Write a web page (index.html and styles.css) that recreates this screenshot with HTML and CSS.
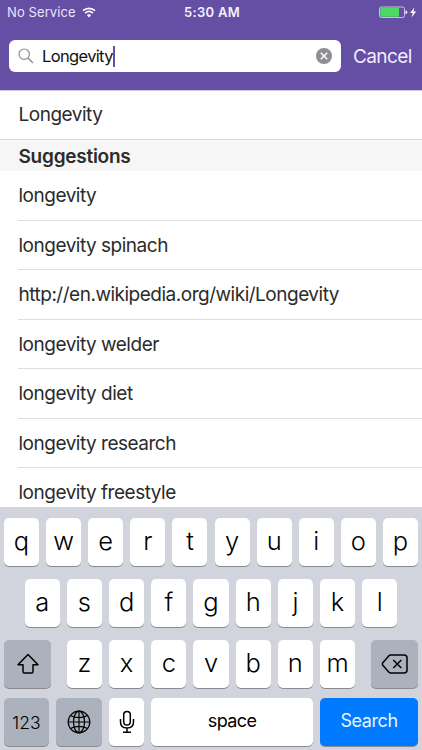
FILE: index.html
```html
<!DOCTYPE html>
<html lang="en">
<head>
<meta charset="utf-8">
<title>Search</title>
<link rel="stylesheet" href="styles.css">
</head>
<body>
<div class="screen">
  <header class="header">
    <div class="status">
      <div class="carrier"><span>No Service</span>
        <svg width="14" height="11" viewBox="0 0 14 11"><path d="M1 3.700C4.500.5 9.500.5 13 3.700M3.100 6.100C5.400 4.100 8.600 4.100 10.900 6.100" fill="none" stroke="#fff" stroke-width="1.700"/><path d="M4.800 8.100Q7 6.500 9.200 8.100L7 10.500Z" fill="#fff"/></svg>
      </div>
      <span class="clock">5:30 AM</span>
      <svg class="battery" width="38" height="13" viewBox="0 0 38 13"><rect x=".5" y="1" width="25" height="10.500" rx="1.800" fill="none" stroke="#c9c2e2"/><rect x="1.300" y="1.800" width="18.700" height="8.900" rx=".8" fill="#4cd964"/><path d="M26.500 4.200Q28.200 4.600 28.200 6.200T26.500 8.300Z" fill="#fff"/><path d="M35.500 1.300 31 7h2.800L32.400 11.600 37.200 5.600H34.300Z" fill="#fff"/></svg>
    </div>
    <div class="searchbar">
      <div class="field">
        <svg class="glass" width="16" height="16" viewBox="0 0 16 16" fill="none" stroke="#8e8e93"><circle cx="6.200" cy="6.200" r="5.200" stroke-width="1.200"/><path d="M10 10 15 15" stroke-width="1.500"/></svg>
        <span class="query">Longevity</span><i class="caret"></i>
        <svg class="clear" width="16" height="16" viewBox="0 0 16 16"><circle cx="8" cy="8" r="8" fill="#8e8e93"/><path d="M4.800 4.800 11.200 11.200M11.200 4.800 4.800 11.200" stroke="#fff" stroke-width="1.500"/></svg>
      </div>
      <span class="cancel">Cancel</span>
    </div>
  </header>
  <main class="results">
    <div class="typed">Longevity</div>
    <h2 class="section">Suggestions</h2>
    <ul class="list">
      <li><span>longevity</span></li>
      <li><span>longevity spinach</span></li>
      <li><span>http://en.wikipedia.org/wiki/Longevity</span></li>
      <li><span>longevity welder</span></li>
      <li><span>longevity diet</span></li>
      <li><span>longevity research</span></li>
      <li><span>longevity freestyle</span></li>
    </ul>
  </main>
  <section class="keyboard">
    <div class="keys"><b>q</b><b>w</b><b>e</b><b>r</b><b>t</b><b>y</b><b>u</b><b>i</b><b>o</b><b>p</b></div>
    <div class="keys"><b>a</b><b>s</b><b>d</b><b>f</b><b>g</b><b>h</b><b>j</b><b>k</b><b>l</b></div>
    <div class="keys third">
      <b class="gray wide"><svg width="24" height="22" viewBox="0 0 24 22"><path d="M12 1.500 22 11.800H17V18.500Q17 20 15.500 20H8.500Q7 20 7 18.500V11.800H2Z" fill="none" stroke="#000" stroke-width="1.500" stroke-linejoin="round"/></svg></b>
      <div class="letters"><b>z</b><b>x</b><b>c</b><b>v</b><b>b</b><b>n</b><b>m</b></div>
      <b class="gray wide"><svg width="28" height="22" viewBox="0 0 28 22" fill="none" stroke="#000" stroke-width="1.500" stroke-linejoin="round"><path d="M9.500 2H23Q26 2 26 5V17Q26 20 23 20H9.500Q8.500 20 7.700 19.100L1.800 12.200Q.8 11 1.800 9.800L7.700 2.900Q8.500 2 9.500 2Z"/><path d="M12.300 7 20.300 15M20.300 7 12.300 15"/></svg></b>
    </div>
    <div class="keys bottom">
      <b class="gray num">123</b>
      <b class="gray globe"><svg width="24" height="24" viewBox="0 0 24 24" fill="none" stroke="#000" stroke-width="1.200"><circle cx="12" cy="12" r="10.800"/><ellipse cx="12" cy="12" rx="5.500" ry="10.800"/><path d="M12 1.200V22.800M1.200 12H22.800M3.500 5.500Q12 9.800 20.500 5.500M3.500 18.500Q12 14.200 20.500 18.500"/></svg></b>
      <b class="mic"><svg width="16" height="24" viewBox="0 0 16 24" fill="none" stroke="#000" stroke-width="1.500"><rect x="4.700" y="1.500" width="6.600" height="13.500" rx="3.300"/><path d="M1.500 9V12Q1.500 18 8 18T14.500 12V9M8 18V22M4 22.300H12"/></svg></b>
      <b class="space">space</b>
      <b class="go">Search</b>
    </div>
  </section>
</div>
</body>
</html>
```
FILE: styles.css
```css
* { box-sizing: border-box; }
body { margin: 0; font-family: Inter, "Liberation Sans", sans-serif; }
svg { display: block; flex: none; }
.screen { width: 422px; height: 750px; overflow: hidden; display: flex; flex-direction: column; background: #fff; }
.header { flex: none; height: 91px; background: #644fa5; border-bottom: 1px solid #cfc8e6; color: #fff; }
.status { height: 24px; padding: 0 5px 0 7px; display: grid; grid-template-columns: 1fr auto 1fr; align-items: center; font-size: 13px; }
.carrier { display: flex; align-items: center; gap: 6px; color: #e9e5f6; letter-spacing: .1px; }
.carrier svg { margin-left: 0; }
.carrier span { width: 69px; white-space: nowrap; }
.clock { font-weight: 600; letter-spacing: .3px; color: #f4f1fb; }
.battery { justify-self: end; }
.searchbar { display: flex; align-items: center; margin-top: 16px; padding-left: 9px; }
.field { width: 332px; height: 32px; background: #fff; border-radius: 6px; display: flex; align-items: center; padding: 0 9px; color: #111; }
.query { margin-left: 8px; font-size: 16.5px; letter-spacing: -.65px; }
.caret { width: 2px; height: 21px; background: #644fa5; }
.clear { margin-left: auto; }
.cancel { margin-left: 12px; font-size: 19px; letter-spacing: -.6px; color: #f1edfb; }
.results { height: 416px; overflow: hidden; color: #2b2b2b; font-size: 19px; letter-spacing: -.49px; }
.typed { height: 49px; padding-left: 18.5px; line-height: 48px; border-bottom: 1px solid #dadada; }
.section { margin: 0; height: 31px; padding-left: 18.5px; background: #f6f6f6; font-size: 19px; font-weight: 600; line-height: 33px; letter-spacing: -.25px; }
.list { margin: 0; padding: 0 0 0 18px; list-style: none; }
.list li { height: 49.5px; padding-left: .5px; line-height: 49px; border-bottom: 1px solid #dedede; white-space: nowrap; }
.keyboard { flex: none; height: 243px; background: #d1d4dc; padding: 11px 4px 0; }
.keys { display: flex; justify-content: center; gap: 7.1px; margin-bottom: 13px; }
.keys b { width: 35.1px; height: 48px; border-radius: 5px; background: #fff; box-shadow: 0 1px 0 #898b90; display: flex; align-items: center; justify-content: center; padding-bottom: 3px; font-size: 25.5px; font-weight: 350; color: #000; }
.third { justify-content: space-between; margin-bottom: 10px; }
.letters { display: flex; gap: 7.1px; }
.keys .gray { background: #abb2bd; }
.keys .wide { width: 47px; padding: 0; }
.keys .num { width: 45px; font-size: 17.5px; font-weight: 350; padding: 0; }
.keys .globe { width: 46px; padding: 0; }
.keys .mic { padding: 0; }
.keys .space { width: 162px; font-size: 18px; font-weight: 400; letter-spacing: -.55px; }
.keys .go { width: 98px; background: #007aff; color: #e8f3ff; font-size: 18px; font-weight: 400; letter-spacing: -.4px; }
```
